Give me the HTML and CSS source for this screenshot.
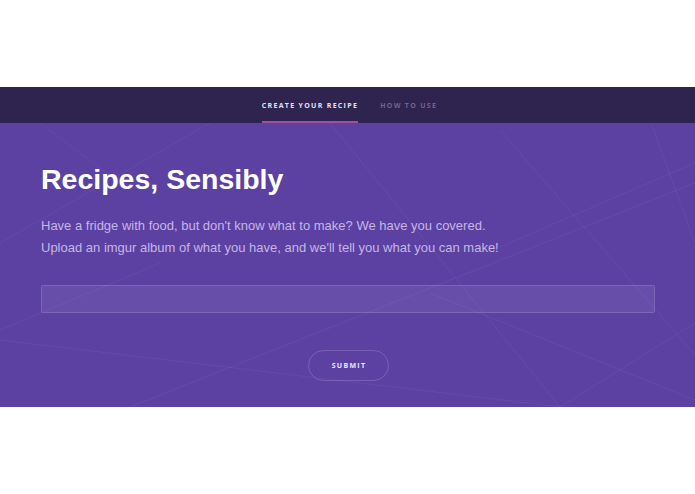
FILE: index.html
```html
<!DOCTYPE html>
<html lang="en">
<head>
<meta charset="utf-8">
<title>Recipes, Sensibly</title>
<link rel="stylesheet" href="styles.css">
</head>
<body>
<div class="top-space"></div>
<nav class="nav">
  <a class="nav-link active" href="#">CREATE YOUR RECIPE</a>
  <a class="nav-link" href="#">HOW TO USE</a>
</nav>
<section class="hero">
  <svg class="hero-lines" viewBox="0 0 695 284" preserveAspectRatio="none" aria-hidden="true">
    <line x1="500" y1="7" x2="695" y2="232"/>
    <line x1="650" y1="-3" x2="695" y2="120"/>
    <line x1="500" y1="124" x2="695" y2="40"/>
    <line x1="430" y1="170" x2="695" y2="277"/>
    <line x1="0" y1="217" x2="695" y2="300"/>
    <line x1="130" y1="284" x2="695" y2="60"/>
    <line x1="0" y1="207" x2="160" y2="140"/>
    <line x1="40" y1="0" x2="120" y2="60"/>
    <line x1="210" y1="0" x2="0" y2="120"/>
    <line x1="330" y1="0" x2="560" y2="284"/>
    <line x1="560" y1="284" x2="695" y2="200"/>
  </svg>
  <div class="hero-inner">
    <h1 class="title">Recipes, Sensibly</h1>
    <p class="lead">Have a fridge with food, but don't know what to make? We have you covered.<br>Upload an imgur album of what you have, and we'll tell you what you can make!</p>
    <input class="album-input" type="text" aria-label="imgur album">
    <div class="actions">
      <button class="submit" type="button">SUBMIT</button>
    </div>
  </div>
</section>
<div class="bottom-space"></div>
</body>
</html>
```
FILE: styles.css
```css
html, body {
  margin: 0;
  padding: 0;
  background: #ffffff;
  font-family: "Liberation Sans", Arial, sans-serif;
}

.top-space {
  height: 87px;
}

.nav {
  height: 36px;
  background: #2f2350;
  display: flex;
  justify-content: center;
  align-items: stretch;
  gap: 22px;
  box-sizing: border-box;
  padding-left: 4px;
}

.nav-link {
  display: flex;
  align-items: center;
  font-family: "Open Sans", sans-serif;
  font-weight: 700;
  font-size: 7px;
  letter-spacing: 1.3px;
  color: #6f6491;
  text-decoration: none;
  border-bottom: 2px solid transparent;
  box-sizing: border-box;
  padding-top: 2px;
}

.nav-link.active {
  color: #e6e0f2;
  border-bottom-color: #a24fa2;
}

.hero {
  position: relative;
  height: 284px;
  background: #5c41a3;
  overflow: hidden;
}

.hero-lines {
  position: absolute;
  inset: 0;
  width: 100%;
  height: 100%;
}

.hero-lines line {
  stroke: rgba(255, 255, 255, 0.05);
  stroke-width: 1;
}

.hero-inner {
  position: relative;
  padding: 38px 40px 0 41px;
  display: flex;
  flex-direction: column;
}

.title {
  margin: 0;
  font-size: 28.5px;
  font-weight: 700;
  color: #ffffff;
  line-height: 36px;
}

.lead {
  margin: 18px 0 0;
  font-size: 13px;
  line-height: 22px;
  color: #c5b6e6;
}

.album-input {
  margin-top: 26px;
  height: 28px;
  box-sizing: border-box;
  background: rgba(255, 255, 255, 0.07);
  border: 1px solid rgba(255, 255, 255, 0.14);
  border-radius: 2px;
  outline: none;
  width: 100%;
}

.actions {
  display: flex;
  justify-content: center;
  margin-top: 37px;
}

.submit {
  width: 81px;
  height: 31px;
  border-radius: 16px;
  border: 1px solid rgba(255, 255, 255, 0.16);
  background: transparent;
  color: #ece6f7;
  font-family: "Open Sans", sans-serif;
  font-weight: 700;
  font-size: 7px;
  letter-spacing: 1.3px;
  padding: 0 0 0 2px;
}

.bottom-space {
  height: 87px;
}
```
